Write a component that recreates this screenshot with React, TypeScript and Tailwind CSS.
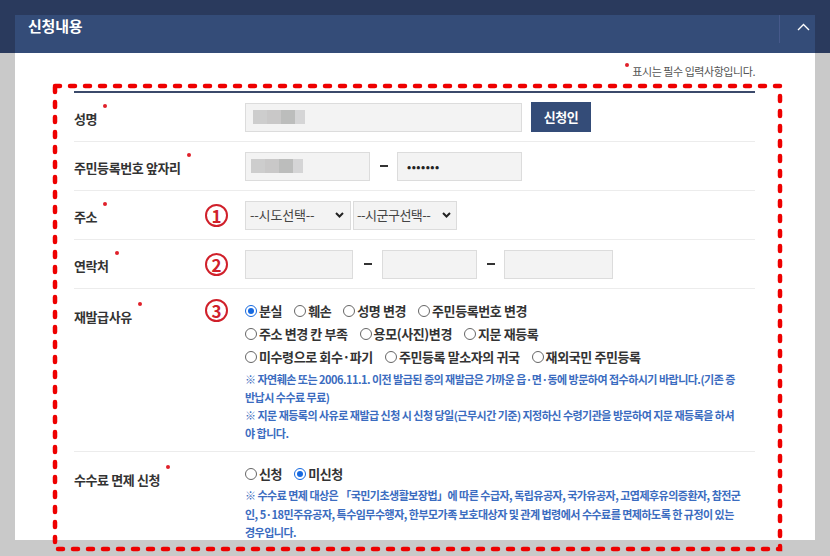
import React from 'react';

const FONT = "font-['Noto_Sans_CJK_KR','Noto_Sans',sans-serif]";

function Req() {
  return <span className="absolute -right-[10px] -top-[5px] h-[4px] w-[4px] rounded-full bg-[#e0202a]" />;
}

function Label({ text }: { text: string }) {
  return (
    <span className="relative inline-block text-[13px] font-bold leading-[20px] tracking-[-0.4px] text-[#333]">
      {text}
      <Req />
    </span>
  );
}

function Num({ n }: { n: string }) {
  return (
    <span className="flex h-[23px] w-[23px] items-center justify-center rounded-full border-2 border-[#d0202a] text-[17px] font-semibold leading-none text-[#d0202a]">
      {n}
    </span>
  );
}

function Radio({ label, checked = false }: { label: string; checked?: boolean }) {
  return (
    <span className="flex items-center gap-[2px]">
      <span
        className={`flex h-[12px] w-[12px] items-center justify-center rounded-full border bg-white ${
          checked ? 'border-[#1669e0]' : 'border-[#666]'
        }`}
      >
        {checked ? <span className="h-[6px] w-[6px] rounded-full bg-[#1669e0]" /> : null}
      </span>
      <span>{label}</span>
    </span>
  );
}

function Blurred() {
  return (
    <div className="flex h-[14px]">
      <span className="w-[14px] bg-[#cdcdcd]" />
      <span className="w-[14px] bg-[#c9c8c8]" />
      <span className="w-[14px] bg-[#bcbdbc]" />
      <span className="w-[10px] bg-[#d5d5d6]" />
    </div>
  );
}

function Dash() {
  return <span className="h-[2px] w-[8px] bg-[#333]" />;
}

function Chevron() {
  return (
    <svg width="9" height="6" viewBox="0 0 9 6" aria-hidden>
      <path d="M1 1 L4.5 4.5 L8 1" fill="none" stroke="#222" strokeWidth="2" />
    </svg>
  );
}

const field = 'flex h-[29px] items-center border border-[#dcdcdc] bg-[#f3f3f3]';
const row = 'flex border-b border-[#ececec]';
const note = 'whitespace-nowrap text-[11px] font-bold leading-[18px] tracking-[-0.52px] text-[#3b6cc0]';
const radios = 'text-[13px] font-bold tracking-[-0.4px] text-[#333]';

export default function App() {
  return (
    <div className={`relative h-[556px] w-[830px] overflow-hidden bg-[#c9c9c9] ${FONT}`}>
      <div className="bg-[#2a3a5d] px-[15px] pt-[15px]">
        <div className="flex h-[38px] items-start justify-between bg-[#344c78] pl-[13px]">
          <h2 className="pt-[1px] text-[15px] font-bold leading-[20px] tracking-[-0.2px] text-white">신청내용</h2>
          <div className="flex h-full items-start">
            <span className="h-[28px] w-px bg-[#46598a]" />
            <span className="pl-[17px] pr-[5px] pt-[8px]">
              <svg width="13" height="8" viewBox="0 0 13 8" aria-hidden>
                <path d="M1 7 L6.5 1.5 L12 7" fill="none" stroke="#fff" strokeWidth="1.4" />
              </svg>
            </span>
          </div>
        </div>
      </div>

      <div className="mx-[15px] h-[487px] overflow-hidden bg-white pl-[59px] pr-[60px] pt-[10px]">
        <p className="flex h-[16px] items-center justify-end text-[11px] tracking-[-0.45px] text-[#555]">
          <span className="relative mr-[5px]">
            <span className="absolute -top-[8px] left-[-2px] h-[4px] w-[4px] rounded-full bg-[#e0202a]" />
          </span>
          표시는 필수 입력사항입니다.
        </p>

        <div className="mt-[12px] border-t-2 border-[#3b4a6b]">
          {/* 성명 */}
          <div className={`${row} h-[49px] items-center`}>
            <div className="w-[171px]">
              <Label text="성명" />
            </div>
            <div className={`${field} w-[277px] pl-[7px]`}>
              <Blurred />
            </div>
            <button className="ml-[9px] h-[30px] w-[60px] bg-[#344c78] text-[13px] font-bold tracking-[-0.4px] text-white">
              신청인
            </button>
          </div>

          {/* 주민등록번호 */}
          <div className={`${row} h-[49px] items-center`}>
            <div className="w-[171px]">
              <Label text="주민등록번호 앞자리" />
            </div>
            <div className={`${field} w-[125px] pl-[5px]`}>
              <Blurred />
            </div>
            <span className="flex w-[27px] justify-center">
              <Dash />
            </span>
            <div className={`${field} w-[125px] pl-[9px] text-[11px] font-bold tracking-[0.5px] text-[#222]`}>
              •••••••
            </div>
          </div>

          {/* 주소 */}
          <div className={`${row} h-[49px] items-center`}>
            <div className="w-[131px]">
              <Label text="주소" />
            </div>
            <div className="w-[40px]">
              <Num n="1" />
            </div>
            <div className={`${field} w-[106px] justify-between pl-[4px] pr-[6px] text-[13px] tracking-[-0.2px] text-[#444]`}>
              <span>--시도선택--</span>
              <Chevron />
            </div>
            <div className={`${field} ml-[2px] w-[104px] justify-between pl-[3px] pr-[5px] text-[13px] tracking-[-0.5px] text-[#444]`}>
              <span>--시군구선택--</span>
              <Chevron />
            </div>
          </div>

          {/* 연락처 */}
          <div className={`${row} h-[49px] items-center`}>
            <div className="w-[131px]">
              <Label text="연락처" />
            </div>
            <div className="w-[40px]">
              <Num n="2" />
            </div>
            <div className={`${field} w-[108px]`} />
            <span className="flex w-[29px] justify-center">
              <Dash />
            </span>
            <div className={`${field} w-[95px]`} />
            <span className="flex w-[27px] justify-center">
              <Dash />
            </span>
            <div className={`${field} w-[109px]`} />
          </div>

          {/* 재발급사유 */}
          <div className={`${row} h-[163px] items-start pt-[10px]`}>
            <div className="w-[131px] pt-[4px]">
              <Label text="재발급사유" />
            </div>
            <div className="w-[40px]">
              <Num n="3" />
            </div>
            <div className="flex-1">
              <div className={radios}>
                <div className="flex h-[23px] items-center gap-[12px]">
                  <Radio label="분실" checked />
                  <Radio label="훼손" />
                  <Radio label="성명 변경" />
                  <Radio label="주민등록번호 변경" />
                </div>
                <div className="flex h-[23px] items-center gap-[12px]">
                  <Radio label="주소 변경 칸 부족" />
                  <Radio label="용모(사진)변경" />
                  <Radio label="지문 재등록" />
                </div>
                <div className="flex h-[23px] items-center gap-[12px]">
                  <Radio label="미수령으로 회수·파기" />
                  <Radio label="주민등록 말소자의 귀국" />
                  <Radio label="재외국민 주민등록" />
                </div>
              </div>
              <div className="mt-[2px]">
                <p className={note}>
                  ※ 자연훼손 또는 2006.11.1. 이전 발급된 증의 재발급은 가까운 읍·면·동에 방문하여 접수하시기 바랍니다.(기존 증
                </p>
                <p className={note}>반납시 수수료 무료)</p>
                <p className={note}>
                  ※ 지문 재등록의 사유로 재발급 신청 시 신청 당일(근무시간 기준) 지정하신 수령기관을 방문하여 지문 재등록을 하셔
                </p>
                <p className={note}>야 합니다.</p>
              </div>
            </div>
          </div>

          {/* 수수료 면제 신청 */}
          <div className="flex items-start pt-[10px]">
            <div className="w-[171px] pt-[4px]">
              <Label text="수수료 면제 신청" />
            </div>
            <div className="flex-1">
              <div className={`flex h-[23px] items-center gap-[12px] ${radios}`}>
                <Radio label="신청" />
                <Radio label="미신청" checked />
              </div>
              <div className="mt-[1px] [&>p]:leading-[18.5px]">
                <p className={note}>
                  ※ 수수료 면제 대상은 「국민기초생활보장법」에 따른 수급자, 독립유공자, 국가유공자, 고엽제후유의증환자, 참전군
                </p>
                <p className={note}>
                  인, 5·18민주유공자, 특수임무수행자, 한부모가족 보호대상자 및 관계 법령에서 수수료를 면제하도록 한 규정이 있는
                </p>
                <p className={note}>경우입니다.</p>
              </div>
            </div>
          </div>
        </div>
      </div>

      <svg className="pointer-events-none absolute left-0 top-0" width="830" height="556" aria-hidden>
        <rect
          x="55"
          y="86"
          width="725"
          height="463"
          fill="none"
          stroke="#ee0000"
          strokeWidth="4.5"
          strokeDasharray="5 10"
          strokeLinecap="round"
        />
      </svg>
    </div>
  );
}
